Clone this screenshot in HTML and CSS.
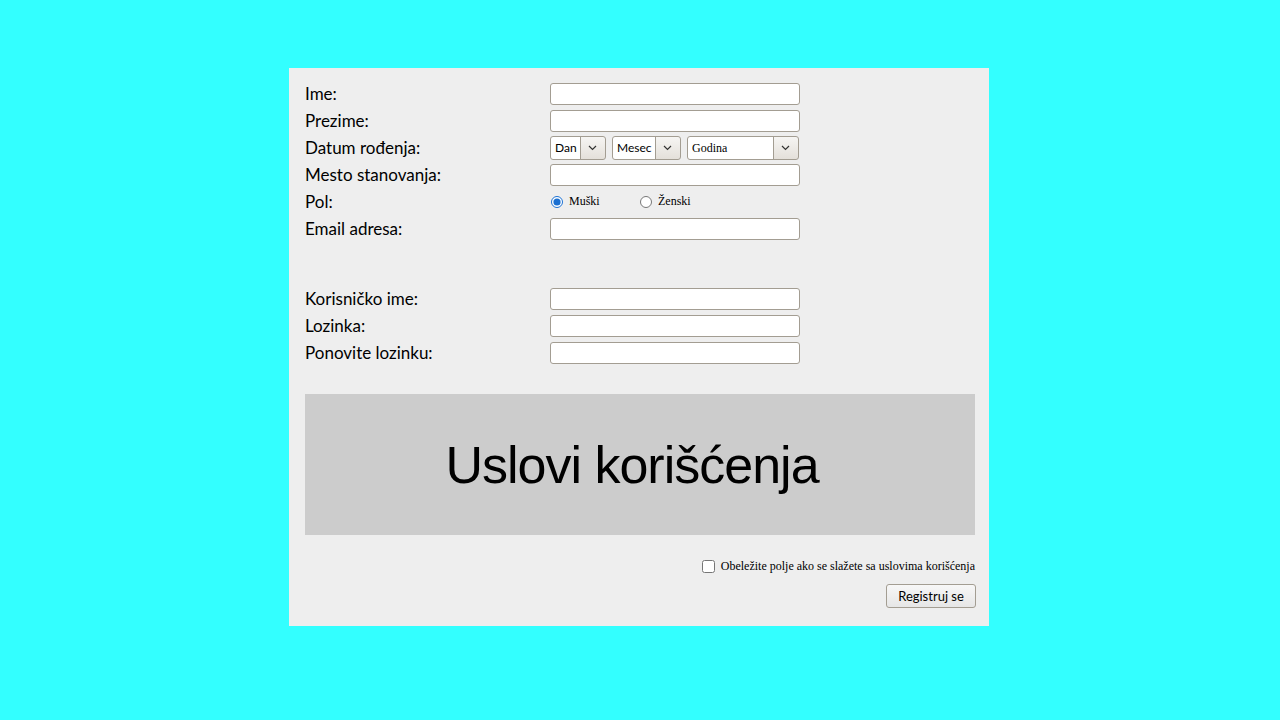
FILE: index.html
```html
<!DOCTYPE html>
<html lang="sr">
<head>
    <meta charset="UTF-8">
    <meta name="viewport" content="width=device-width, initial-scale=1.0">
    <title>Registracija</title>
    <link rel="stylesheet" href="styles.css">
</head>
<body>
    <div class="forma">
        <div class="red">
            <label class="naziv">Ime:</label>
            <input type="text" class="polje">
        </div>
        <div class="red">
            <label class="naziv">Prezime:</label>
            <input type="text" class="polje">
        </div>
        <div class="red">
            <label class="naziv">Datum rođenja:</label>
            <div class="datum">
                <select class="izbor dan"><option>Dan</option></select>
                <select class="izbor mesec"><option>Mesec</option></select>
                <select class="izbor godina"><option>Godina</option></select>
            </div>
        </div>
        <div class="red">
            <label class="naziv">Mesto stanovanja:</label>
            <input type="text" class="polje">
        </div>
        <div class="red">
            <label class="naziv">Pol:</label>
            <div class="pol">
                <label class="opcija"><input type="radio" name="pol" checked> Muški</label>
                <label class="opcija"><input type="radio" name="pol"> Ženski</label>
            </div>
        </div>
        <div class="red">
            <label class="naziv">Email adresa:</label>
            <input type="text" class="polje">
        </div>

        <div class="razmak"></div>

        <div class="red">
            <label class="naziv">Korisničko ime:</label>
            <input type="text" class="polje">
        </div>
        <div class="red">
            <label class="naziv">Lozinka:</label>
            <input type="password" class="polje">
        </div>
        <div class="red">
            <label class="naziv">Ponovite lozinku:</label>
            <input type="password" class="polje">
        </div>

        <div class="uslovi">Uslovi korišćenja</div>

        <div class="saglasnost">
            <label><input type="checkbox"> Obeležite polje ako se slažete sa uslovima korišćenja</label>
        </div>
        <div class="dugme-red">
            <button class="dugme">Registruj se</button>
        </div>
    </div>
</body>
</html>
```

FILE: styles.css
```css
body {
    margin: 0;
    padding-right: 2px;
    background-color: #33ffff;
    height: 720px;
}

.forma {
    width: 700px;
    margin: 68px auto 0;
    padding: 12px 14px 18px 16px;
    box-sizing: border-box;
    background-color: #eeeeee;
}

.red {
    display: flex;
    align-items: center;
    height: 27px;
}

.naziv {
    width: 245px;
    font-family: "Lato", sans-serif;
    font-size: 17px;
    color: #000;
}

.polje {
    width: 250px;
    height: 22px;
    margin: 0;
    box-sizing: border-box;
    border: 1px solid #a39d92;
    border-radius: 3px;
    background: #fff;
}

.datum {
    display: flex;
    gap: 6px;
}

.izbor {
    appearance: none;
    height: 24px;
    margin: 0;
    padding: 0 0 0 4px;
    box-sizing: border-box;
    border: 1px solid #a39d92;
    border-radius: 3px;
    font-size: 12px;
    color: #000;
    background-color: #fff;
    background-image: url("data:image/svg+xml,%3Csvg xmlns='http://www.w3.org/2000/svg' width='25' height='22'%3E%3Cdefs%3E%3ClinearGradient id='g' x1='0' y1='0' x2='0' y2='1'%3E%3Cstop offset='0' stop-color='%23f6f5f3'/%3E%3Cstop offset='1' stop-color='%23e4e0da'/%3E%3C/linearGradient%3E%3C/defs%3E%3Crect width='25' height='22' fill='url(%23g)'/%3E%3Cline x1='0.5' y1='0' x2='0.5' y2='22' stroke='%23a39d92'/%3E%3Cpath d='M9 9l3.5 3.5L16 9' fill='none' stroke='%23333' stroke-width='1.2'/%3E%3C/svg%3E");
    background-repeat: no-repeat;
    background-position: right center;
}

.dan {
    width: 56px;
    font-family: "Lato", sans-serif;
}

.mesec {
    width: 69px;
    font-family: "Lato", sans-serif;
}

.godina {
    width: 112px;
    font-family: "Liberation Serif", serif;
}

.pol {
    display: flex;
    font-family: "Liberation Serif", serif;
    font-size: 12px;
}

.opcija {
    display: flex;
    align-items: center;
    width: 89px;
}

.opcija input {
    margin: 0 6px 0 1px;
    width: 12px;
    height: 12px;
    accent-color: #1a6fd1;
}

.razmak {
    height: 43px;
}

.uslovi {
    display: flex;
    align-items: center;
    justify-content: center;
    height: 141px;
    margin-top: 28px;
    padding-right: 16px;
    background-color: #cccccc;
    font-family: "Liberation Sans", Arial, sans-serif;
    font-size: 52px;
    letter-spacing: -1px;
    color: #000;
}

.saglasnost {
    display: flex;
    justify-content: flex-end;
    margin-top: 24px;
    font-family: "Liberation Serif", serif;
    font-size: 12px;
}

.saglasnost label {
    display: flex;
    align-items: center;
}

.saglasnost input {
    margin: 0 6px 0 0;
    width: 13px;
    height: 13px;
}

.dugme-red {
    display: flex;
    justify-content: flex-end;
    margin-top: 10px;
    margin-right: -1px;
}

.dugme {
    width: 90px;
    height: 24px;
    border: 1px solid #a39d92;
    border-radius: 3px;
    background: linear-gradient(#f7f7f7, #e6e6e6);
    font-family: "Lato", sans-serif;
    font-size: 13px;
    color: #000;
    cursor: pointer;
}
```
